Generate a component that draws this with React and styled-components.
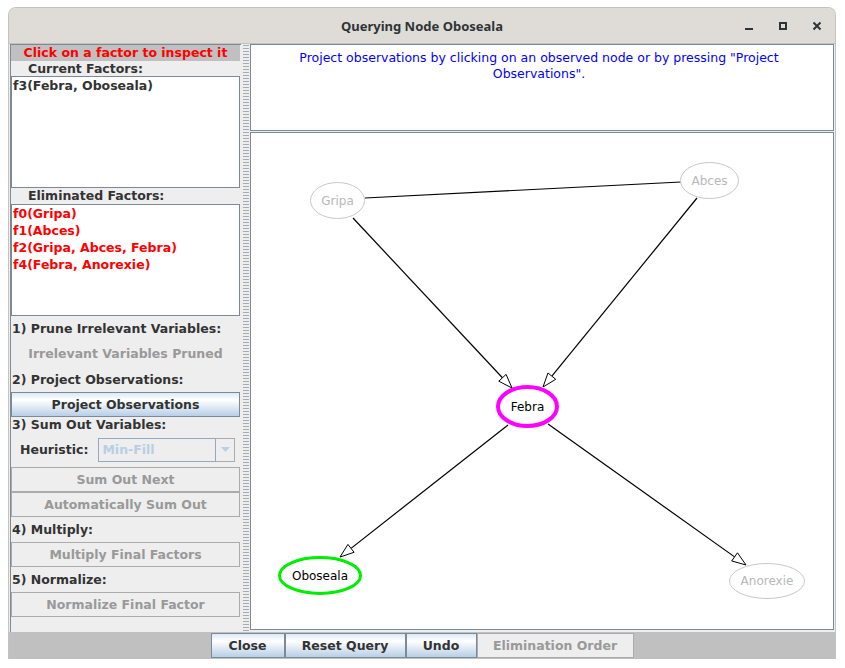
import React from 'react'
import styled, { createGlobalStyle } from 'styled-components'

const GlobalStyle = createGlobalStyle`
	body {
		margin: 0;
		background: #ffffff;
		font-family: "DejaVu Sans", sans-serif;
	}
`

const BLUE_GRAY = '#7a8a99'
const UI_FONT = '12.5px'

const Window = styled.div`
	width: 828px;
	height: 652px;
	margin: 7px 0 0 8px;
	box-sizing: border-box;
	border: 1px solid #c6c2bd;
	border-bottom: none;
	border-radius: 8px 8px 0 0;
	overflow: hidden;
	display: flex;
	flex-direction: column;
	background: #eeeeee;
`

const TitleBar = styled.div`
	height: 36px;
	flex: none;
	box-sizing: border-box;
	display: grid;
	grid-template-columns: 1fr auto 1fr;
	align-items: center;
	background: #dfdcd8;
	border-bottom: 1px solid #c4c0bb;
`

const Title = styled.div`
	grid-column: 2;
	font-family: "Noto Sans", sans-serif;
	font-weight: 700;
	font-size: 13px;
	color: #2e3436;
`

const Controls = styled.div`
	grid-column: 3;
	justify-self: end;
	display: flex;
	padding-right: 1px;
`

const ControlButton = styled.div`
	width: 34px;
	height: 34px;
	display: flex;
	align-items: center;
	justify-content: center;
`

const Main = styled.div`
	flex: 1;
	display: flex;
	padding: 0 1px;
	min-height: 0;
`

const LeftPane = styled.div`
	width: 231px;
	flex: none;
	box-sizing: border-box;
	border-left: 1px solid ${BLUE_GRAY};
	border-top: 1px solid ${BLUE_GRAY};
	padding-right: 1px;
	display: flex;
	flex-direction: column;
`

const HintRow = styled.div`
	height: 16px;
	line-height: 16px;
	background: #c0c0c0;
	color: #ff0000;
	font-weight: bold;
	font-size: ${UI_FONT};
	text-align: center;
	white-space: nowrap;
`

const SectionLabel = styled.div`
	height: ${p => p.$h}px;
	line-height: ${p => p.$h}px;
	padding-left: 17px;
	color: #333333;
	font-weight: bold;
	font-size: ${UI_FONT};
`

const FactorList = styled.div`
	height: 112px;
	box-sizing: border-box;
	border: 1px solid ${BLUE_GRAY};
	background: #ffffff;
	padding: 0 0 0 1px;
`

const FactorItem = styled.div`
	color: ${p => (p.$red ? '#ff0000' : '#333333')};
	font-weight: bold;
	font-size: ${UI_FONT};
	line-height: 17px;
`

const StepLabel = styled.div`
	height: ${p => p.$h}px;
	display: flex;
	align-items: center;
	padding-left: 1px;
	color: #333333;
	font-weight: bold;
	font-size: ${UI_FONT};
`

const StatusText = styled.div`
	height: 25px;
	display: flex;
	align-items: center;
	justify-content: center;
	color: #999999;
	font-weight: bold;
	font-size: ${UI_FONT};
`

const Button = styled.button`
	height: 25px;
	width: ${p => (p.$w ? `${p.$w}px` : '229px')};
	box-sizing: border-box;
	margin: 0;
	padding: 0;
	flex: none;
	border: 1px solid ${BLUE_GRAY};
	background: linear-gradient(#dde8f3 0%, #ffffff 30%, #b8cfe5 100%);
	color: #333333;
	font-family: "DejaVu Sans", sans-serif;
	font-weight: bold;
	font-size: ${UI_FONT};
	white-space: nowrap;

	&:disabled {
		background: #eeeeee;
		border-color: #ababab;
		color: #999999;
	}
`

const HeuristicRow = styled.div`
	height: 35px;
	display: flex;
	align-items: center;
	gap: 10px;
	padding-left: 9px;
`

const FieldLabel = styled.span`
	color: #333333;
	font-weight: bold;
	font-size: ${UI_FONT};
`

const Combo = styled.div`
	width: 137px;
	height: 24px;
	display: flex;
`

const ComboField = styled.div`
	flex: 1;
	box-sizing: border-box;
	border: 1px solid #93a9c0;
	background: #eeeeee;
	color: #b8cfe5;
	font-weight: bold;
	font-size: ${UI_FONT};
	line-height: 22px;
	padding-left: 3px;
`

const ComboArrow = styled.div`
	width: 19px;
	box-sizing: border-box;
	border: 1px solid #ababab;
	border-left: none;
	display: flex;
	align-items: center;
	justify-content: center;
	background: #eeeeee;
`

const Divider = styled.div`
	width: 9px;
	flex: none;
	box-sizing: border-box;
	padding: 0 1px 0 2px;
	background-clip: content-box;
	background-color: #eeeeee;
	background-image: radial-gradient(circle, #a5abb2 0.6px, transparent 0.9px);
	background-size: 2px 3px;
`

const RightPane = styled.div`
	flex: 1;
	display: flex;
	flex-direction: column;
	gap: 1px;
	padding-bottom: 2px;
`

const MessageBox = styled.div`
	height: 87px;
	flex: none;
	box-sizing: border-box;
	border: 1px solid ${BLUE_GRAY};
	background: #ffffff;
	padding-top: 5px;
`

const MessageText = styled.div`
	max-width: 500px;
	margin: 0 auto;
	padding-right: 6px;
	text-align: center;
	color: #0000ff;
	font-size: ${UI_FONT};
	line-height: 16px;
`

const GraphBox = styled.div`
	flex: 1;
	box-sizing: border-box;
	border: 1px solid ${BLUE_GRAY};
	background: #ffffff;
	overflow: hidden;

	svg {
		display: block;
	}
`

const ButtonBar = styled.div`
	height: 27px;
	flex: none;
	box-sizing: border-box;
	padding-top: 1px;
	background: #c0c0c0;
	display: flex;
	justify-content: center;
	align-items: flex-start;
`

const NODES = [
	{ id: 'Gripa', x: 337.5, y: 200.5, rx: 27, ry: 18 },
	{ id: 'Abces', x: 709.5, y: 180.5, rx: 29, ry: 18 },
	{ id: 'Febra', x: 527.5, y: 406.5, rx: 29.5, ry: 19.5, color: '#ff00ff', width: 4 },
	{ id: 'Oboseala', x: 320, y: 575.5, rx: 40.5, ry: 18, color: '#00ee00', width: 3 },
	{ id: 'Anorexie', x: 767, y: 581, rx: 37.5, ry: 17.5 },
]

const EDGES = [
	{ from: [365, 198], to: [681, 182], arrow: false },
	{ from: [353, 218], to: [512, 388], arrow: true },
	{ from: [697, 198], to: [543, 387], arrow: true },
	{ from: [508, 425], to: [340, 557], arrow: true },
	{ from: [548, 424], to: [746, 565], arrow: true },
]

const arrowHead = (x1, y1, x2, y2, len = 14, w = 10) => {
	const dx = x2 - x1
	const dy = y2 - y1
	const d = Math.hypot(dx, dy)
	const ux = dx / d
	const uy = dy / d
	const bx = x2 - ux * len
	const by = y2 - uy * len
	const px = -uy * w / 2
	const py = ux * w / 2
	return {
		base: [bx, by],
		points: `${x2},${y2} ${bx + px},${by + py} ${bx - px},${by - py}`,
	}
}

const Graph = () => (
	<svg width="582" height="496" viewBox="251 133 582 496">
		{EDGES.map((e, i) => {
			const [x1, y1] = e.from
			const [x2, y2] = e.to
			if (!e.arrow) {
				return <line key={i} x1={x1} y1={y1} x2={x2} y2={y2} stroke="#000" strokeWidth="1.2" />
			}
			const head = arrowHead(x1, y1, x2, y2)
			return (
				<g key={i}>
					<line x1={x1} y1={y1} x2={head.base[0]} y2={head.base[1]} stroke="#000" strokeWidth="1.2" />
					<polygon points={head.points} fill="#fff" stroke="#000" strokeWidth="1" />
				</g>
			)
		})}
		{NODES.map(n => (
			<g key={n.id}>
				<ellipse
					cx={n.x}
					cy={n.y}
					rx={n.rx}
					ry={n.ry}
					fill="#fff"
					stroke={n.color || '#c8c8c8'}
					strokeWidth={n.width || 1}
				/>
				<text
					x={n.x}
					y={n.y + 4}
					textAnchor="middle"
					fontFamily="DejaVu Sans, sans-serif"
					fontSize="12"
					fill={n.color ? '#000' : '#b8b8b8'}
				>
					{n.id}
				</text>
			</g>
		))}
	</svg>
)

const WindowControls = () => (
	<Controls>
		<ControlButton>
			<svg width="10" height="10" viewBox="0 0 10 10">
				<rect x="1" y="7" width="8" height="2" fill="#2e3436" />
			</svg>
		</ControlButton>
		<ControlButton>
			<svg width="10" height="10" viewBox="0 0 10 10">
				<rect x="2" y="2" width="6" height="6" fill="none" stroke="#2e3436" strokeWidth="2" />
			</svg>
		</ControlButton>
		<ControlButton>
			<svg width="10" height="10" viewBox="0 0 10 10">
				<path d="M1.5 1.5 L8.5 8.5 M8.5 1.5 L1.5 8.5" stroke="#2e3436" strokeWidth="2" />
			</svg>
		</ControlButton>
	</Controls>
)

const App = () => (
	<>
		<GlobalStyle />
		<Window>
			<TitleBar>
				<Title>Querying Node Oboseala</Title>
				<WindowControls />
			</TitleBar>
			<Main>
				<LeftPane>
					<HintRow>Click on a factor to inspect it</HintRow>
					<SectionLabel $h={15}>Current Factors:</SectionLabel>
					<FactorList>
						<FactorItem>f3(Febra, Oboseala)</FactorItem>
					</FactorList>
					<SectionLabel $h={16}>Eliminated Factors:</SectionLabel>
					<FactorList>
						<FactorItem $red>f0(Gripa)</FactorItem>
						<FactorItem $red>f1(Abces)</FactorItem>
						<FactorItem $red>f2(Gripa, Abces, Febra)</FactorItem>
						<FactorItem $red>f4(Febra, Anorexie)</FactorItem>
					</FactorList>
					<StepLabel $h={25}>1) Prune Irrelevant Variables:</StepLabel>
					<StatusText>Irrelevant Variables Pruned</StatusText>
					<StepLabel $h={26}>2) Project Observations:</StepLabel>
					<Button>Project Observations</Button>
					<StepLabel $h={15}>3) Sum Out Variables:</StepLabel>
					<HeuristicRow>
						<FieldLabel>Heuristic:</FieldLabel>
						<Combo>
							<ComboField>Min-Fill</ComboField>
							<ComboArrow>
								<svg width="9" height="5" viewBox="0 0 9 5">
									<path d="M0 0 L9 0 L4.5 5 Z" fill="#b8cfe5" />
								</svg>
							</ComboArrow>
						</Combo>
					</HeuristicRow>
					<Button disabled>Sum Out Next</Button>
					<Button disabled>Automatically Sum Out</Button>
					<StepLabel $h={25}>4) Multiply:</StepLabel>
					<Button disabled>Multiply Final Factors</Button>
					<StepLabel $h={25}>5) Normalize:</StepLabel>
					<Button disabled>Normalize Final Factor</Button>
				</LeftPane>
				<Divider />
				<RightPane>
					<MessageBox>
						<MessageText>
							Project observations by clicking on an observed node or by pressing "Project Observations".
						</MessageText>
					</MessageBox>
					<GraphBox>
						<Graph />
					</GraphBox>
				</RightPane>
			</Main>
			<ButtonBar>
				<Button $w={74}>Close</Button>
				<Button $w={121}>Reset Query</Button>
				<Button $w={71}>Undo</Button>
				<Button $w={157} disabled>Elimination Order</Button>
			</ButtonBar>
		</Window>
	</>
)

export default App
